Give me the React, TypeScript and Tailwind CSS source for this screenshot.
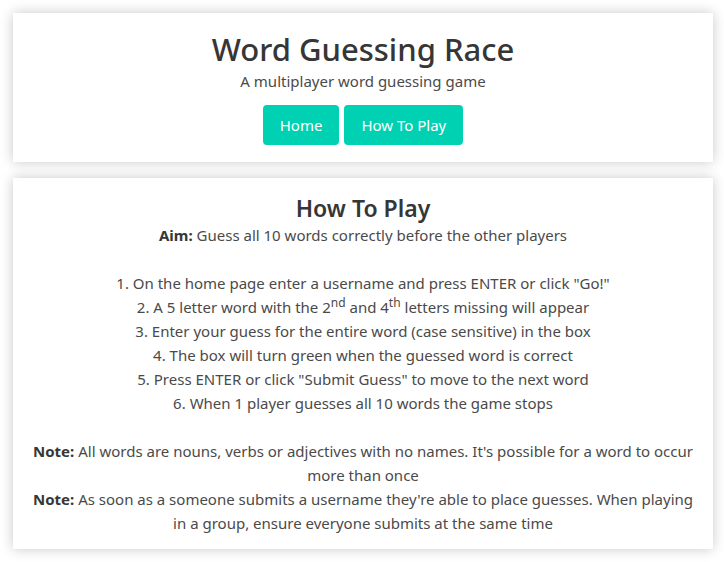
const font = { fontFamily: '"Noto Sans", "Open Sans", sans-serif' };

const steps = [
  <>On the home page enter a username and press ENTER or click "Go!"</>,
  <>
    A 5 letter word with the 2<sup>nd</sup> and 4<sup>th</sup> letters missing will appear
  </>,
  <>Enter your guess for the entire word (case sensitive) in the box</>,
  <>The box will turn green when the guessed word is correct</>,
  <>Press ENTER or click "Submit Guess" to move to the next word</>,
  <>When 1 player guesses all 10 words the game stops</>,
];

function Card({ children, className = '' }: { children: React.ReactNode; className?: string }) {
  return (
    <div className={`bg-white shadow-[0_0_12px_rgba(0,0,0,0.22)] px-4 text-center ${className}`}>
      {children}
    </div>
  );
}

export default function App() {
  return (
    <div className="min-h-[562px] bg-white pt-[13px] pb-[13px] pl-[13px] pr-[11px] flex flex-col gap-4 text-[#4a4a4a]" style={font}>
      {/* Header */}
      <Card className="pt-[17px] pb-[17px]">
        <h1 className="text-[31px] leading-[39px] font-medium text-[#363636]">Word Guessing Race</h1>
        <p className="text-[15px] leading-6">A multiplayer word guessing game</p>
        <div className="mt-3 flex justify-center gap-[5px]">
          <button className="h-10 px-[17px] rounded bg-[#00d1b2] text-white text-[15px]">Home</button>
          <button className="h-10 px-[17px] rounded bg-[#00d1b2] text-white text-[15px]">How To Play</button>
        </div>
      </Card>

      {/* How to play */}
      <Card className="pt-[15px] pb-[14px] text-[15px] leading-6">
        <h2 className="text-[23px] leading-[30px] font-semibold text-[#363636]">How To Play</h2>
        <p>
          <strong className="font-bold text-[#363636]">Aim:</strong> Guess all 10 words correctly before the other players
        </p>
        <br />
        <ol className="list-decimal list-inside">
          {steps.map((s, i) => (
            <li key={i} className="leading-6 [&_sup]:text-xs [&_sup]:leading-none">
              {s}
            </li>
          ))}
        </ol>
        <br />
        <p>
          <strong className="font-bold text-[#363636]">Note:</strong> All words are nouns, verbs or adjectives with no names. It's possible for a word to occur more than once
        </p>
        <p>
          <strong className="font-bold text-[#363636]">Note:</strong> As soon as a someone submits a username they're able to place guesses. When playing in a group, ensure everyone submits at the same time
        </p>
      </Card>
    </div>
  );
}
